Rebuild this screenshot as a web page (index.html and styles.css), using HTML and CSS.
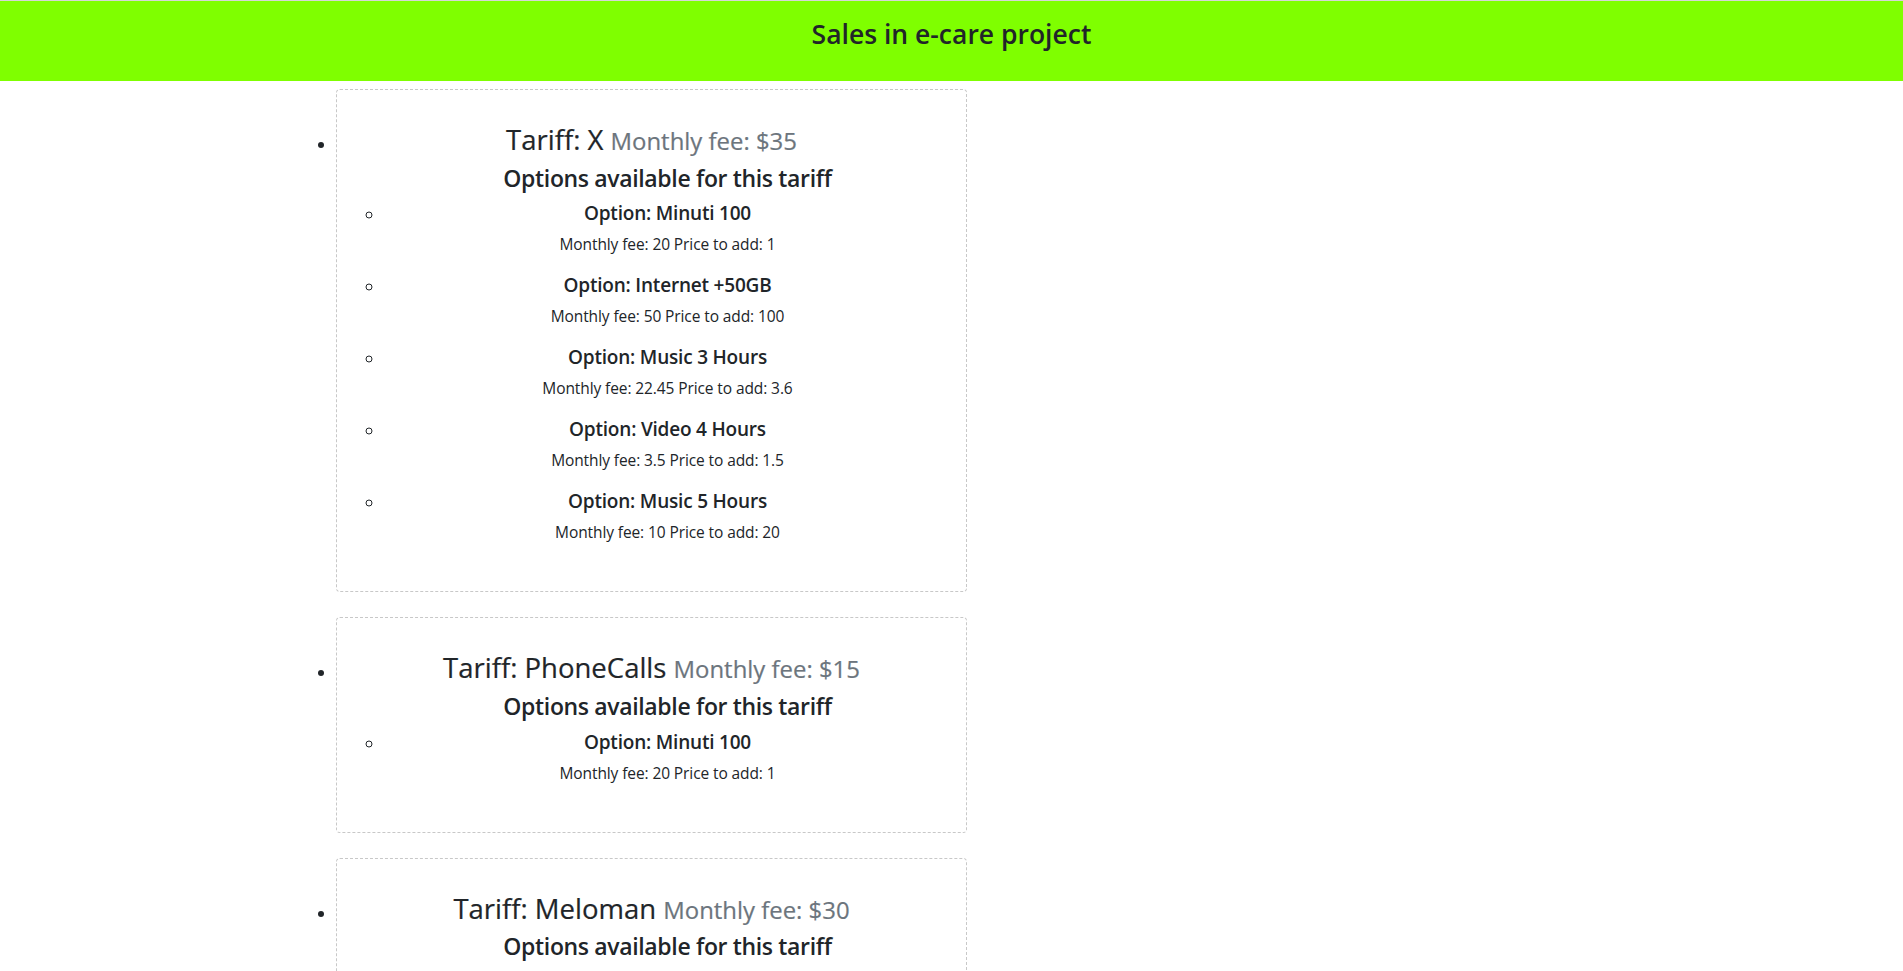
FILE: index.html
```html
<!DOCTYPE html>
<html lang="en">
<head>
<meta charset="utf-8">
<title>Sales in e-care project</title>
<link rel="stylesheet" href="styles.css">
</head>
<body>
<header class="topbar">
  <h1 class="site-title">Sales in e-care project</h1>
</header>
<main>
  <ul class="tariffs">
    <li class="tariff">
      <div class="card">
        <h3 class="tariff-title">Tariff: X <small class="fee">Monthly fee: $35</small></h3>
        <div class="options">
          <h4 class="options-title">Options available for this tariff</h4>
          <ul class="option-list">
            <li class="option">
              <h5 class="option-name">Option: Minuti 100</h5>
              <p class="option-price">Monthly fee: 20 Price to add: 1</p>
            </li>
            <li class="option">
              <h5 class="option-name">Option: Internet +50GB</h5>
              <p class="option-price">Monthly fee: 50 Price to add: 100</p>
            </li>
            <li class="option">
              <h5 class="option-name">Option: Music 3 Hours</h5>
              <p class="option-price">Monthly fee: 22.45 Price to add: 3.6</p>
            </li>
            <li class="option">
              <h5 class="option-name">Option: Video 4 Hours</h5>
              <p class="option-price">Monthly fee: 3.5 Price to add: 1.5</p>
            </li>
            <li class="option">
              <h5 class="option-name">Option: Music 5 Hours</h5>
              <p class="option-price">Monthly fee: 10 Price to add: 20</p>
            </li>
          </ul>
        </div>
      </div>
    </li>
    <li class="tariff">
      <div class="card">
        <h3 class="tariff-title">Tariff: PhoneCalls <small class="fee">Monthly fee: $15</small></h3>
        <div class="options">
          <h4 class="options-title">Options available for this tariff</h4>
          <ul class="option-list">
            <li class="option">
              <h5 class="option-name">Option: Minuti 100</h5>
              <p class="option-price">Monthly fee: 20 Price to add: 1</p>
            </li>
          </ul>
        </div>
      </div>
    </li>
    <li class="tariff">
      <div class="card">
        <h3 class="tariff-title">Tariff: Meloman <small class="fee">Monthly fee: $30</small></h3>
        <div class="options">
          <h4 class="options-title">Options available for this tariff</h4>
          <ul class="option-list">
            <li class="option">
              <h5 class="option-name">Option: Music 3 Hours</h5>
              <p class="option-price">Monthly fee: 22.45 Price to add: 3.6</p>
            </li>
            <li class="option">
              <h5 class="option-name">Option: Music 5 Hours</h5>
              <p class="option-price">Monthly fee: 10 Price to add: 20</p>
            </li>
          </ul>
        </div>
      </div>
    </li>
  </ul>
</main>
</body>
</html>
```
FILE: styles.css
```css
html, body {
  margin: 0;
  padding: 0;
}

body {
  font-family: "Open Sans", "Noto Sans", "Liberation Sans", sans-serif;
  font-size: 16px;
  line-height: 1.5;
  color: #212529;
  background: #ffffff;
}

.topbar {
  box-sizing: border-box;
  height: 81px;
  border-top: 1px solid #d6d6d6;
  background: #7fff00;
  padding-top: 17px;
  text-align: center;
}

.site-title {
  margin: 0;
  font-size: 26.5px;
  font-weight: 600;
  line-height: 33.6px;
  color: #212529;
}

.tariffs {
  list-style: disc outside;
  margin: 8px 0 0;
  padding: 0 0 0 336px;
}

.tariff {
  width: 631px;
  margin-bottom: 25px;
}

.card {
  border: 1px dashed #c8c8c8;
  border-radius: 4px;
  padding: 33px 15px 31px;
  text-align: center;
}

.tariff-title {
  margin: 0 0 6px;
  font-size: 27.5px;
  font-weight: 500;
  line-height: 33.6px;
  -webkit-text-stroke: 0.2px #212529;
}

.fee {
  font-size: 87%;
  font-weight: 400;
  color: #6c757d;
  -webkit-text-stroke: 0.2px #6c757d;
}

.options {
  padding-left: 32px;
}

.options-title {
  margin: 0 0 8px;
  font-size: 23px;
  font-weight: 600;
  letter-spacing: -0.35px;
  line-height: 28.8px;
}

.option-list {
  list-style: circle outside;
  margin: 0 0 16px;
  padding: 0;
}

.option-name {
  margin: 0 0 7px;
  padding-top: 1px;
  font-size: 19px;
  font-weight: 600;
  letter-spacing: -0.2px;
  line-height: 24px;
}

.option-price {
  margin: 0 0 16px;
  font-size: 15.5px;
  letter-spacing: -0.1px;
  line-height: 24px;
}
```
